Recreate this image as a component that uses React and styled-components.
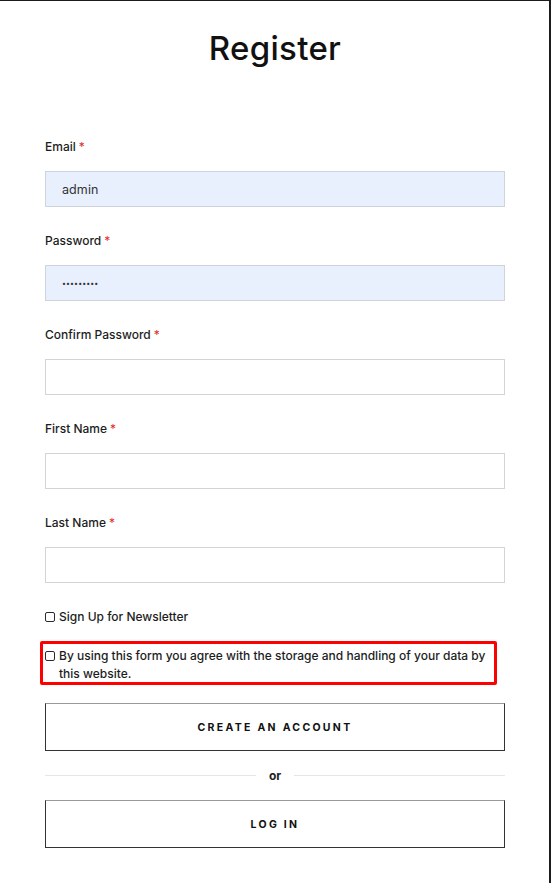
import React from "react";
import styled, { createGlobalStyle } from "styled-components";

const Global = createGlobalStyle`
  html, body { margin: 0; padding: 0; background: #fff; }
  body {
    font-family: Inter, "Noto Sans", sans-serif;
    color: #1a1a1a;
  }
  * { box-sizing: border-box; }
`;

const Frame = styled.div`
  width: 551px;
  height: 883px;
  border-top: 1px solid #1c1c1c;
  border-right: 2px solid #1c1c1c;
  background: #fff;
  overflow: hidden;
`;

const Form = styled.div`
  width: 460px;
  margin-left: 45px;
  display: flex;
  flex-direction: column;
`;

const Title = styled.h1`
  margin: 27px 0 0 0;
  font-size: 33px;
  line-height: 40px;
  font-weight: 500;
  text-align: center;
  color: #111;
  letter-spacing: 0.3px;
`;

const Fields = styled.div`
  margin-top: 69px;
  display: flex;
  flex-direction: column;
  gap: 24px;
`;

const Field = styled.div`
  display: flex;
  flex-direction: column;
  gap: 16px;
`;

const Label = styled.label`
  margin-top: 2px;
  font-size: 12px;
  line-height: 16px;
  font-weight: 500;
  color: #1d1d1d;
  height: 16px;
`;

const Star = styled.span`
  color: #e02b27;
  margin-left: 3px;
  font-weight: 400;
`;

const Input = styled.div`
  height: 36px;
  border: 1px solid ${(p) => (p.$filled ? "#cfd3da" : "#d4d4d4")};
  background: ${(p) => (p.$filled ? "#e8f0fe" : "#fff")};
  padding-left: 16px;
  display: flex;
  align-items: center;
  font-size: ${(p) => (p.$secret ? "7px" : "12.5px")};
  color: #333;
  letter-spacing: 0.1px;
`;

const Checks = styled.div`
  margin-top: 25px;
  display: flex;
  flex-direction: column;
`;

const CheckRow = styled.div`
  display: flex;
  align-items: flex-start;
  gap: 4px;
  font-size: 12px;
  line-height: 18px;
  font-weight: 500;
  color: #1d1d1d;
`;

const Box = styled.span`
  flex: none;
  width: 10px;
  height: 10px;
  margin-top: 4px;
  border: 1px solid #2a2a2a;
  border-radius: 2px;
  background: #fff;
`;

const Highlight = styled.div`
  margin: 15px 0 0 -5px;
  width: 457px;
  height: 44px;
  border: 3px solid #ff0000;
  border-radius: 2px;
  padding: 3px 0 0 2px;
`;

const Button = styled.div`
  height: 48px;
  border: 1px solid #333;
  border-top-color: #999;
  display: flex;
  align-items: center;
  justify-content: center;
  font-size: 10.5px;
  font-weight: 700;
  letter-spacing: 2.3px;
  color: #111;
  margin-top: ${(p) => p.$mt}px;
`;

const Divider = styled.div`
  margin-top: 16px;
  display: flex;
  align-items: center;
  gap: 13px;
  height: 16px;
  font-size: 12px;
  font-weight: 700;
  color: #222;
`;

const Line = styled.span`
  flex: 1;
  height: 1px;
  background: #e6e6e6;
`;

const fields = [
  { label: "Email", value: "admin", filled: true },
  { label: "Password", value: "•••••••••", filled: true, secret: true },
  { label: "Confirm Password" },
  { label: "First Name" },
  { label: "Last Name" },
];

export default function App() {
  return (
    <>
      <Global />
      <Frame>
        <Form>
          <Title>Register</Title>
          <Fields>
            {fields.map((f) => (
              <Field key={f.label}>
                <Label>
                  {f.label}
                  <Star>*</Star>
                </Label>
                <Input $filled={f.filled} $secret={f.secret}>
                  {f.value}
                </Input>
              </Field>
            ))}
          </Fields>
          <Checks>
            <CheckRow>
              <Box />
              Sign Up for Newsletter
            </CheckRow>
            <Highlight>
              <CheckRow>
                <Box />
                <span>
                  By using this form you agree with the storage and handling of your data by this website.
                </span>
              </CheckRow>
            </Highlight>
          </Checks>
          <Button $mt={18}>CREATE AN ACCOUNT</Button>
          <Divider>
            <Line />
            or
            <Line />
          </Divider>
          <Button $mt={17}>LOG IN</Button>
        </Form>
      </Frame>
    </>
  );
}
